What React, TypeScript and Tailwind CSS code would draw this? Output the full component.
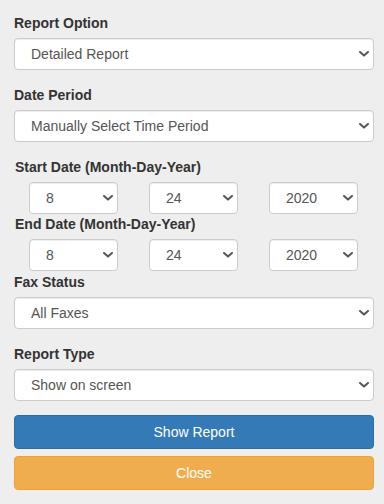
import React from "react";

// Small chevron like the native select arrow
function Chevron() {
  return (
    <svg
      width="10"
      height="6"
      viewBox="0 0 10 6"
      className="pointer-events-none absolute right-[5px] top-1/2 -translate-y-1/2"
    >
      <path d="M1 1l4 3.6L9 1" fill="none" stroke="#555" strokeWidth="2" strokeLinecap="round" strokeLinejoin="round" />
    </svg>
  );
}

type SelectProps = { value: string; options?: string[] };

function Select({ value, options }: SelectProps) {
  const opts = options ?? [value];
  return (
    <div className="relative">
      <select
        defaultValue={value}
        className="block h-[32px] w-full appearance-none rounded-[4px] border border-[#ccc] bg-white pl-[16px] pr-[24px] text-[14px] leading-[20px] text-[#555] shadow-[inset_0_1px_1px_rgba(0,0,0,0.075)] outline-none"
      >
        {opts.map((o) => (
          <option key={o}>{o}</option>
        ))}
      </select>
      <Chevron />
    </div>
  );
}

function Label({ children }: { children: React.ReactNode }) {
  return (
    <label className="mb-[5px] block text-[14px] font-bold leading-[20px] text-[#333]">
      {children}
    </label>
  );
}

function DateRow() {
  return (
    <div className="grid grid-cols-3">
      <div className="pl-[15px] pr-[16px]">
        <Select value="8" />
      </div>
      <div className="pl-[15px] pr-[16px]">
        <Select value="24" />
      </div>
      <div className="pl-[15px] pr-[16px]">
        <Select value="2020" />
      </div>
    </div>
  );
}

export default function App() {
  return (
    <div
      className="min-h-[504px] w-[384px] bg-[#eee] pl-[14px] pr-[10px] pt-[13px]"
      style={{ fontFamily: '"Liberation Sans", Arial, sans-serif' }}
    >
      <div className="mb-[15px]">
        <Label>Report Option</Label>
        <Select value="Detailed Report" options={["Detailed Report", "Summary Report"]} />
      </div>

      <div className="mb-[15px]">
        <Label>Date Period</Label>
        <Select value="Manually Select Time Period" />
      </div>

      <div>
        <div className="pl-[1px]">
          <Label>Start Date (Month-Day-Year)</Label>
        </div>
        <DateRow />
      </div>

      <div className="mb-[1px]">
        <div className="pl-[1px]">
          <Label>End Date (Month-Day-Year)</Label>
        </div>
        <DateRow />
      </div>

      <div className="mb-[15px]">
        <Label>Fax Status</Label>
        <Select value="All Faxes" />
      </div>

      <div className="mb-[14px]">
        <Label>Report Type</Label>
        <Select value="Show on screen" />
      </div>

      <button
        type="button"
        className="block h-[34px] w-full rounded-[4px] border border-[#2e6da4] bg-[#337ab7] text-[14px] leading-[20px] text-white"
      >
        Show Report
      </button>
      <button
        type="button"
        className="mt-[7px] block h-[34px] w-full rounded-[4px] border border-[#eea236] bg-[#f0ad4e] text-[14px] leading-[20px] text-white"
      >
        Close
      </button>
    </div>
  );
}
